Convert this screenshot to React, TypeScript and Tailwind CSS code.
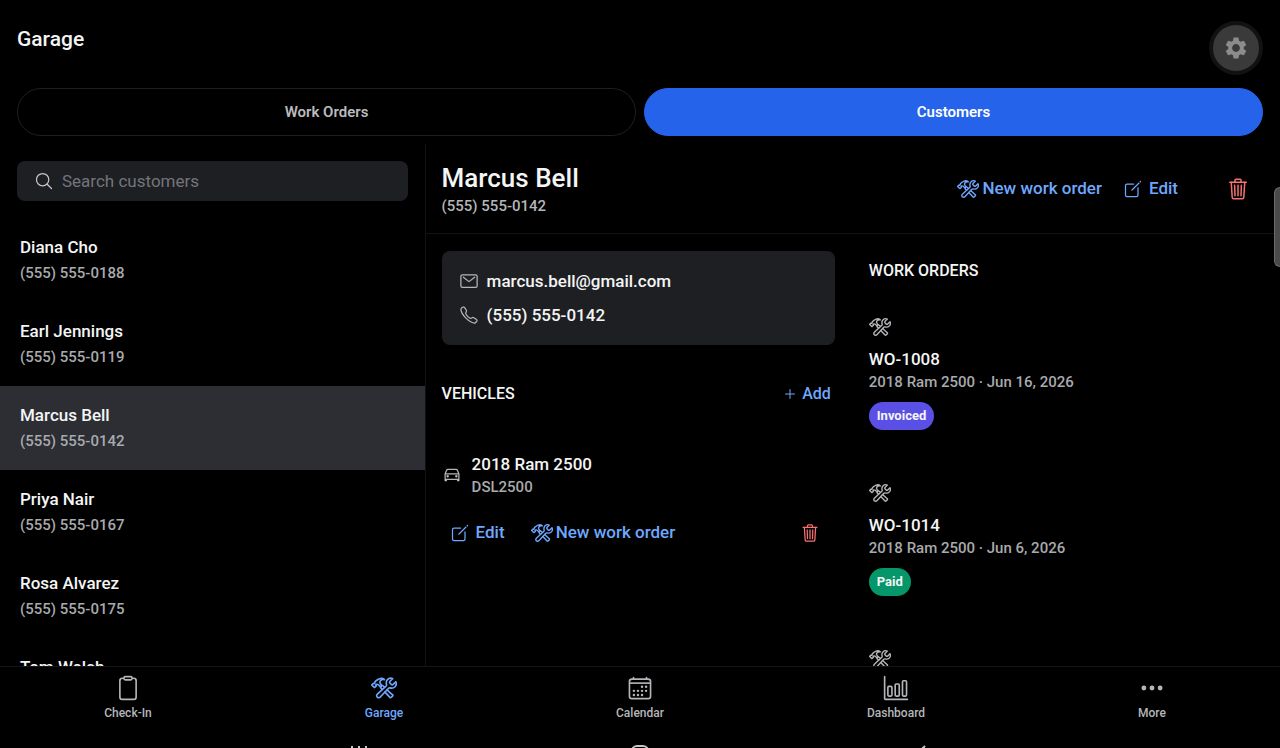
import { useState } from "react";
import {
  IoAddOutline,
  IoBarChartOutline,
  IoCalendarOutline,
  IoCallOutline,
  IoCarOutline,
  IoClipboardOutline,
  IoConstructOutline,
  IoCreateOutline,
  IoEllipsisHorizontal,
  IoMailOutline,
  IoSearchOutline,
  IoTrashOutline,
} from "react-icons/io5";
import { MdSettings } from "react-icons/md";
import { clsx } from "clsx";

const customers = [
  { name: "Diana Cho", phone: "(555) 555-0188" },
  { name: "Earl Jennings", phone: "(555) 555-0119" },
  { name: "Marcus Bell", phone: "(555) 555-0142" },
  { name: "Priya Nair", phone: "(555) 555-0167" },
  { name: "Rosa Alvarez", phone: "(555) 555-0175" },
  { name: "Tom Welch", phone: "(555) 555-0133" },
];

const workOrders = [
  { id: "WO-1008", detail: "2018 Ram 2500 · Jun 16, 2026", status: "Invoiced", color: "bg-[#5b50e6]" },
  { id: "WO-1014", detail: "2018 Ram 2500 · Jun 6, 2026", status: "Paid", color: "bg-[#059669]" },
  { id: "WO-1003", detail: "2018 Ram 2500 · May 12, 2026", status: "Paid", color: "bg-[#059669]" },
];

const navItems = [
  { label: "Check-In", icon: IoClipboardOutline },
  { label: "Garage", icon: IoConstructOutline },
  { label: "Calendar", icon: IoCalendarOutline },
  { label: "Dashboard", icon: IoBarChartOutline },
  { label: "More", icon: IoEllipsisHorizontal },
];

function Header() {
  return (
    <header className="flex h-20 shrink-0 items-start justify-between pt-[21px] pr-[17px] pl-[17px]">
      <h1 className="pt-1 text-[21px] leading-7 font-medium">Garage</h1>
      <button
        aria-label="Settings"
        className="flex size-[54px] items-center justify-center rounded-full border-4 border-[#121212] bg-[#3a3a3a] text-[#8c8c8c]"
      >
        <MdSettings className="size-[26px]" />
      </button>
    </header>
  );
}

function Tabs() {
  const [tab, setTab] = useState("Customers");

  return (
    <div className="grid shrink-0 grid-cols-2 gap-2 px-[17px] pt-2 pb-2">
      {["Work Orders", "Customers"].map((label) => (
        <button
          key={label}
          onClick={() => setTab(label)}
          className={clsx(
            "h-12 rounded-full border text-[15px] font-semibold",
            tab === label ? "border-[#2563eb] bg-[#2563eb] text-white" : "border-[#1e1f22] text-[#b9bbbe]"
          )}
        >
          {label}
        </button>
      ))}
    </div>
  );
}

function CustomerList({ selected, onSelect }: { selected: string; onSelect: (name: string) => void }) {
  return (
    <aside className="flex min-h-0 w-[33.25%] flex-col border-r border-[#111214]">
      <div className="shrink-0 p-[17px]">
        <label className="flex h-10 items-center gap-2 rounded-lg bg-[#1e1f23] pl-[17px]">
          <IoSearchOutline className="size-5 text-[#c4c6c8]" />
          <input
            type="search"
            aria-label="Search customers"
            placeholder="Search customers"
            className="min-w-0 flex-1 bg-transparent pt-0.5 text-[17px] outline-none placeholder:text-[#73757b]"
          />
        </label>
      </div>
      <ul className="min-h-0 flex-1 overflow-y-auto [scrollbar-width:none]">
        {customers.map((c) => (
          <li key={c.name}>
            <button
              onClick={() => onSelect(c.name)}
              className={clsx("flex h-[84px] w-full flex-col items-start justify-center gap-0.5 px-5 text-left", c.name === selected && "bg-[#2c2e34]")}
            >
              <span className="text-[17px] leading-6 font-medium">{c.name}</span>
              <span className="text-[15px] leading-6 font-medium text-[#a8aaad]">{c.phone}</span>
            </button>
          </li>
        ))}
      </ul>
    </aside>
  );
}

function CustomerHeader() {
  return (
    <div className="flex h-[90px] shrink-0 items-center justify-between border-b border-[#111214] pr-[30px] pl-4">
      <div className="pt-0.5">
        <h2 className="text-[26px] leading-8 font-medium">Marcus Bell</h2>
        <p className="text-[15px] leading-6 font-medium text-[#b4b6b9]">(555) 555-0142</p>
      </div>
      <div className="flex items-center text-[17px] font-medium text-[#6ea8fe]">
        <button className="flex items-center gap-[3px]">
          <IoConstructOutline className="size-[22px]" />
          New work order
        </button>
        <button className="ml-[21px] flex items-center gap-1.5">
          <IoCreateOutline className="size-5" />
          Edit
        </button>
        <button aria-label="Delete customer" className="ml-12 text-[#f87171]">
          <IoTrashOutline className="size-6" />
        </button>
      </div>
    </div>
  );
}

function Vehicles() {
  return (
    <section className="px-4 pr-[18px]">
      <div className="flex flex-col gap-2.5 rounded-lg bg-[#1e1f23] px-[17px] py-[18px] text-[17px] font-medium">
        <a href="mailto:marcus.bell@gmail.com" className="flex items-center gap-2 leading-6">
          <IoMailOutline className="size-5 text-[#b4b6b9]" />
          marcus.bell@gmail.com
        </a>
        <a href="tel:5555550142" className="flex items-center gap-2 leading-6">
          <IoCallOutline className="size-5 text-[#b4b6b9]" />
          (555) 555-0142
        </a>
      </div>

      <div className="mt-[37px] flex items-center justify-between pr-1">
        <h3 className="text-base leading-6 font-medium">VEHICLES</h3>
        <button className="flex items-center gap-1 text-base font-medium text-[#6ea8fe]">
          <IoAddOutline className="size-4" />
          Add
        </button>
      </div>

      <div className="mt-[46px] flex items-center gap-2.5">
        <IoCarOutline className="size-5 text-[#b4b6b9]" />
        <div>
          <p className="text-[17px] leading-6 font-medium">2018 Ram 2500</p>
          <p className="text-[15px] leading-[22px] font-medium text-[#a8aaad]">DSL2500</p>
        </div>
      </div>

      <div className="mt-[22px] flex items-center pr-[15px] pl-2 text-[17px] font-medium text-[#6ea8fe]">
        <button className="flex items-center gap-1.5">
          <IoCreateOutline className="size-5" />
          Edit
        </button>
        <button className="ml-[26px] flex items-center gap-[3px]">
          <IoConstructOutline className="size-[22px]" />
          New work order
        </button>
        <button aria-label="Delete vehicle" className="ml-auto text-[#f87171]">
          <IoTrashOutline className="size-5" />
        </button>
      </div>
    </section>
  );
}

function WorkOrders() {
  return (
    <section className="min-h-0 overflow-y-auto px-4 [scrollbar-width:none]">
      <h3 className="pt-2 text-base leading-6 font-medium">WORK ORDERS</h3>
      <ul className="mt-[33px]">
        {workOrders.map((order) => (
          <li key={order.id} className="h-[166px]">
            <IoConstructOutline className="size-[22px] text-[#b4b6b9]" />
            <p className="mt-[9px] text-[17px] leading-6 font-medium">{order.id}</p>
            <p className="text-[15px] leading-[22px] font-medium text-[#a8aaad]">{order.detail}</p>
            <span className={clsx("mt-[9px] inline-flex h-7 items-center rounded-full px-2 text-[13px] font-bold", order.color)}>
              {order.status}
            </span>
          </li>
        ))}
      </ul>
    </section>
  );
}

function BottomNav() {
  return (
    <nav className="grid h-16 shrink-0 grid-cols-5 border-t border-[#141518]">
      {navItems.map(({ label, icon: Icon }) => (
        <a
          key={label}
          href="#"
          className={clsx(
            "flex flex-col items-center gap-1 pt-2 text-xs font-medium",
            label === "Garage" ? "text-[#6ea8fe]" : "text-[#b4b6b9]"
          )}
        >
          <Icon className="size-[26px]" />
          {label}
        </a>
      ))}
    </nav>
  );
}

// Android navigation keys, mostly below the fold
function SystemBar() {
  return (
    <div className="flex h-[18px] shrink-0 items-start justify-center gap-[261px] overflow-hidden pt-3.5 text-[#c4c6c8]">
      <svg className="h-5 w-5 shrink-0" viewBox="0 0 20 20" fill="none" stroke="currentColor" strokeWidth="2">
        <path d="M3 2v16M10 2v16M17 2v16" />
      </svg>
      <svg className="h-5 w-5 shrink-0" viewBox="0 0 20 20" fill="none" stroke="currentColor" strokeWidth="2">
        <rect x="2" y="2" width="16" height="16" rx="5" />
      </svg>
      <svg className="h-5 w-5 shrink-0" viewBox="0 0 20 20" fill="none" stroke="currentColor" strokeWidth="2">
        <path d="M14 2l-8 8 8 8" />
      </svg>
    </div>
  );
}

export default function App() {
  const [selected, setSelected] = useState("Marcus Bell");

  return (
    <div className="relative flex h-screen flex-col overflow-hidden bg-black font-[Roboto,sans-serif] text-[#f4f5f5]">
      <Header />
      <Tabs />
      <main className="flex min-h-0 flex-1">
        <CustomerList selected={selected} onSelect={setSelected} />
        <div className="flex min-h-0 flex-1 flex-col">
          <CustomerHeader />
          <div className="grid min-h-0 flex-1 grid-cols-2 grid-rows-[minmax(0,1fr)] pt-[17px]">
            <Vehicles />
            <WorkOrders />
          </div>
        </div>
      </main>
      <BottomNav />
      <SystemBar />
      {/* Edge panel handle */}
      <div className="absolute top-[187px] right-0 h-20 w-1.5 rounded-l-md border border-r-0 border-[#6b6b6b] bg-[#4a4a4a]" />
    </div>
  );
}
